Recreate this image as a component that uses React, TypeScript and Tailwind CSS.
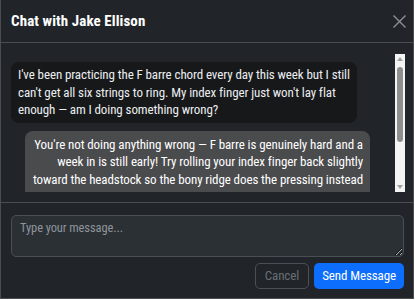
const INCOMING = [
  "I've been practicing the F barre chord every day this week but I still",
  "can't get all six strings to ring. My index finger just won't lay flat",
  "enough — am I doing something wrong?",
];

const OUTGOING = [
  "You're not doing anything wrong — F barre is genuinely hard and a",
  "week in is still early! Try rolling your index finger back slightly",
  "toward the headstock so the bony ridge does the pressing instead",
];

function Bubble({ lines, mine }: { lines: string[]; mine?: boolean }) {
  return (
    <div
      className={
        mine
          ? "ml-[14px] w-[345px] shrink-0 rounded-lg bg-[#4a4b4d] px-[7px] pb-[20px] pt-[5px] text-right text-white"
          : "w-[346px] shrink-0 rounded-lg bg-[#16181a] px-[7px] py-[4px] text-[#eceef0]"
      }
    >
      {lines.map((l) => (
        <div key={l} className="whitespace-nowrap">
          {l}
        </div>
      ))}
    </div>
  );
}

function FakeScrollbar() {
  return (
    <div className="flex w-[10px] shrink-0 flex-col items-center bg-[#f4f4f4] py-[3px]">
      <div className="h-0 w-0 border-x-[3px] border-b-[4px] border-x-transparent border-b-[#a0a0a0]" />
      <div className="mt-[6px] h-[75px] w-[6px] rounded-full bg-[#8e8e8e]" />
      <div className="flex-1" />
      <div className="h-0 w-0 border-x-[3px] border-t-[4px] border-x-transparent border-t-[#a0a0a0]" />
    </div>
  );
}

export default function App() {
  return (
    <div className="flex h-[299px] w-[414px] flex-col border border-t-0 border-[#4a4e53] bg-[#212529] tracking-[-0.1px] [font-family:'Roboto_Condensed',Roboto,sans-serif]">
      {/* Header */}
      <header className="flex h-[43px] shrink-0 items-center justify-between border-b border-[#4a4e53] pl-[10px] pr-[7px] pt-[1px]">
        <h1 className="text-[15px] font-bold tracking-[0.1px] text-white">Chat with Jake Ellison</h1>
        <button className="flex h-[14px] w-[14px] items-center justify-center text-[#8d9196]">
          <svg width="13" height="13" viewBox="0 0 13 13" fill="none" stroke="currentColor" strokeWidth="1.4">
            <path d="M0.5 0.5 L12.5 12.5 M12.5 0.5 L0.5 12.5" />
          </svg>
        </button>
      </header>

      {/* Messages */}
      <div className="flex h-[159px] shrink-0 pb-[10px] pl-[10px] pr-[8px] pt-[11px]">
        <div className="flex h-[138px] flex-1 flex-col gap-[8px] overflow-hidden pt-[8px] text-[13px] leading-[17.5px]">
          <Bubble lines={INCOMING} />
          <Bubble lines={OUTGOING} mine />
        </div>
        <FakeScrollbar />
      </div>

      {/* Footer */}
      <div className="flex flex-1 flex-col border-t border-[#4a4e53] pb-[9px] pl-[10px] pr-[9px] pt-[12px]">
        <textarea
          placeholder="Type your message..."
          className="h-[42px] w-full resize-y rounded-[5px] border border-[#4a4f55] bg-[#2b3035] px-[8px] py-[3px] text-[12.5px] text-white outline-none placeholder:text-[#8f949a]"
        />
        <div className="mt-[6px] flex justify-end gap-[5px] text-[13px]">
          <button className="h-[26px] rounded-[5px] border border-[#495057] px-[9px] text-[#686e74]">Cancel</button>
          <button className="h-[26px] rounded-[5px] bg-[#0d6efd] px-[8px] text-white">Send Message</button>
        </div>
      </div>
    </div>
  );
}
